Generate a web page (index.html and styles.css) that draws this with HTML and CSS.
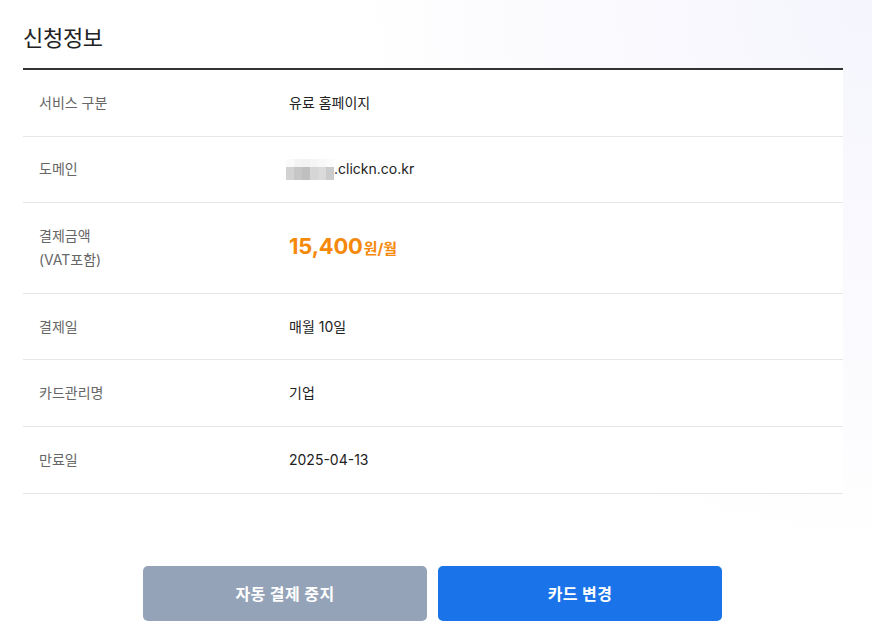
FILE: index.html
```html
<!DOCTYPE html>
<html lang="ko">
<head>
<meta charset="utf-8">
<title>신청정보</title>
<link rel="stylesheet" href="styles.css">
</head>
<body>
<main class="page">
  <section class="info">
    <h2 class="title">신청정보</h2>
    <div class="table">
      <div class="row">
        <div class="label">서비스 구분</div>
        <div class="value">유료 홈페이지</div>
      </div>
      <div class="row">
        <div class="label">도메인</div>
        <div class="value"><span class="blur"><i class="b1"></i><i class="b2"></i><i class="b3"></i><i class="b4"></i><i class="b5"></i><i class="b6"></i></span>.clickn.co.kr</div>
      </div>
      <div class="row">
        <div class="label">결제금액<br>(VAT포함)</div>
        <div class="value"><span class="price">15,400</span><span class="unit">원/월</span></div>
      </div>
      <div class="row">
        <div class="label">결제일</div>
        <div class="value">매월 10일</div>
      </div>
      <div class="row">
        <div class="label">카드관리명</div>
        <div class="value">기업</div>
      </div>
      <div class="row">
        <div class="label">만료일</div>
        <div class="value">2025-04-13</div>
      </div>
    </div>
  </section>
  <div class="actions">
    <button class="btn btn-gray" type="button">자동 결제 중지</button>
    <button class="btn btn-blue" type="button">카드 변경</button>
  </div>
</main>
</body>
</html>
```

FILE: styles.css
```css
* { box-sizing: border-box; }
html, body { margin: 0; height: 100%; }
body {
  font-family: Inter, "Noto Sans CJK KR", sans-serif;
  color: #222;
  background:
    radial-gradient(ellipse 520px 560px at 100% 0%, #f5f5fd 0%, #f9f9fe 45%, rgba(255,255,255,0) 100%),
    #ffffff;
}
.page {
  width: 820px;
  margin-left: 23px;
  padding-top: 20px;
}
.title {
  margin: 0;
  font-size: 22px;
  font-weight: 400;
  line-height: 36px;
  color: #222;
  padding-bottom: 12px;
  border-bottom: 2px solid #333;
  letter-spacing: -0.3px;
}
.table { background: #fff; }
.row {
  display: flex;
  align-items: center;
  padding: 20.8px 16px;
  border-bottom: 1px solid #e6e6e6;
  font-size: 14px;
  line-height: 24px;
}
.label {
  width: 250px;
  flex: none;
  color: #666;
}
.value {
  display: flex;
  align-items: baseline;
  color: #222;
  letter-spacing: 0;
}
.blur {
  display: inline-flex;
  flex-direction: row;
  align-self: center;
  height: 21px;
  margin-left: -3px;
}
.blur i {
  display: block;
  width: 8px;
  height: 21px;
}
.b1 { background: linear-gradient(#fafafa 0 8px, #d2d2d2 8px); }
.b2 { background: linear-gradient(#f4f4f4 0 8px, #c6c6c6 8px); }
.b3 { background: linear-gradient(#f2f2f2 0 8px, #bfbfbf 8px); }
.b4 { background: linear-gradient(#f5f5f5 0 8px, #d6d6d6 8px); }
.b5 { background: linear-gradient(#f8f8f8 0 8px, #dadada 8px); }
.b6 { background: linear-gradient(#fbfbfb 0 8px, #cbcbcb 8px); }
.price {
  font-size: 22px;
  font-weight: 700;
  color: #f5890a;
  letter-spacing: -0.2px;
}
.unit {
  font-size: 15px;
  font-weight: 700;
  color: #f5890a;
  margin-left: 1px;
}
.actions {
  display: flex;
  gap: 11px;
  padding-left: 120px;
  margin-top: 72px;
}
.btn {
  width: 284px;
  height: 55px;
  border: 0;
  border-radius: 5px;
  color: #fff;
  font-family: Inter, "Noto Sans CJK KR", sans-serif;
  font-size: 16px;
  font-weight: 700;
  letter-spacing: 0.4px;
  cursor: pointer;
}
.btn-gray { background: #94a3b8; }
.btn-blue { background: #1a73e8; }
```
